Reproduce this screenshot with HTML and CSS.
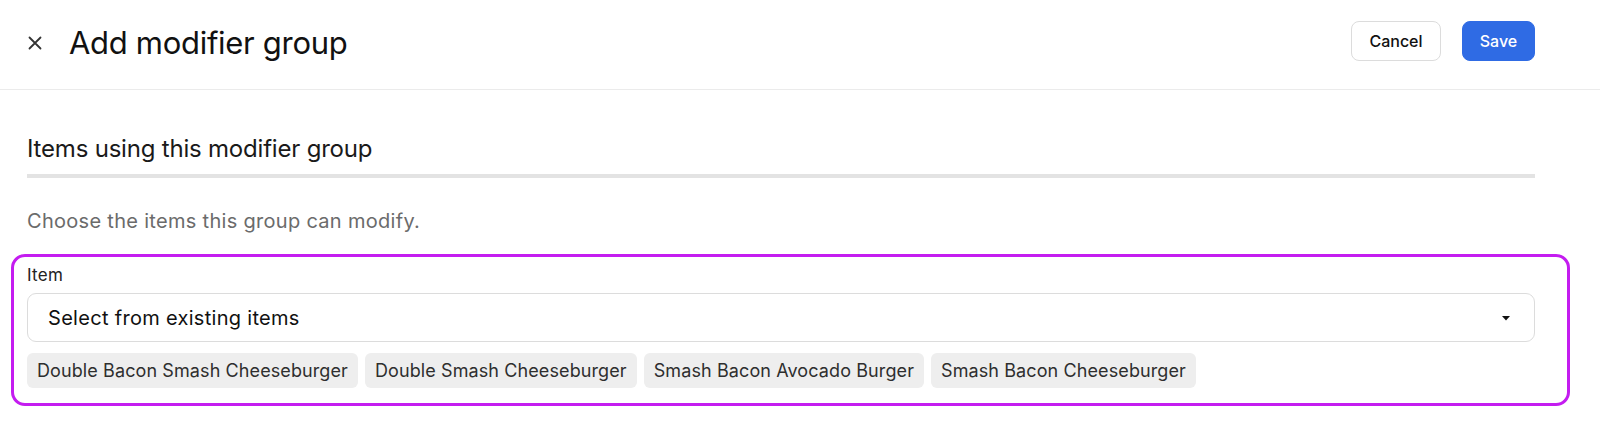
FILE: index.html
```html
<!DOCTYPE html>
<html lang="en">
<head>
  <meta charset="UTF-8" />
  <meta name="viewport" content="width=device-width, initial-scale=1.0"/>
  <title>Add modifier group</title>
  <link rel="stylesheet" href="styles.css">
</head>
<body>

  <header class="top-bar">
    <div class="title-wrap">
      <button class="close-btn" aria-label="Close">
        <svg width="14" height="14" viewBox="0 0 14 14"><path d="M1.5 1.5 L12.5 12.5 M12.5 1.5 L1.5 12.5" stroke="#333" stroke-width="1.8" stroke-linecap="round"/></svg>
      </button>
      <h1>Add modifier group</h1>
    </div>
    <div class="actions">
      <button class="btn cancel">Cancel</button>
      <button class="btn save">Save</button>
    </div>
  </header>

  <main class="content">
    <h2 class="section-title">Items using this modifier group</h2>
    <div class="section-rule"></div>
    <p class="hint">Choose the items this group can modify.</p>

    <div class="field highlight">
      <label class="field-label">Item</label>
      <div class="select">
        <span>Select from existing items</span>
        <svg class="caret" width="8" height="5" viewBox="0 0 8 5"><path d="M0 0 H8 L4 4.5 Z" fill="#111"/></svg>
      </div>
      <div class="chips">
        <span class="chip">Double Bacon Smash Cheeseburger</span>
        <span class="chip">Double Smash Cheeseburger</span>
        <span class="chip">Smash Bacon Avocado Burger</span>
        <span class="chip">Smash Bacon Cheeseburger</span>
      </div>
    </div>
  </main>

</body>
</html>
```

FILE: styles.css
```css
* { box-sizing: border-box; }

body {
  margin: 0;
  background: #ffffff;
  color: #111;
  font-family: 'Inter', 'Noto Sans', sans-serif;
}

.top-bar {
  height: 90px;
  display: flex;
  justify-content: space-between;
  align-items: center;
  padding: 0 65px 3px 27px;
  border-bottom: 1px solid #ebebeb;
}

.title-wrap {
  display: flex;
  align-items: center;
  gap: 26px;
}

.close-btn {
  background: none;
  border: none;
  padding: 0;
  width: 16px;
  height: 16px;
  display: flex;
  align-items: center;
  justify-content: center;
  cursor: pointer;
}

h1 {
  margin: 0;
  font-size: 31px;
  line-height: 40px;
  font-weight: 400;
  letter-spacing: -0.3px;
  color: #111;
}

.actions {
  display: flex;
  gap: 21px;
  margin-bottom: 4px;
}

.btn {
  height: 40px;
  padding: 0 15px;
  border-radius: 8px;
  font-family: inherit;
  font-size: 16px;
  font-weight: 500;
  cursor: pointer;
}

.cancel {
  background: #fff;
  border: 1px solid #dcdcdc;
  color: #111;
  width: 90px;
}

.save {
  background: #2f6be4;
  border: 1px solid #2f6be4;
  color: #fff;
  width: 73px;
}

.content {
  padding: 0 65px 0 27px;
}

.section-title {
  margin: 44px 0 0;
  font-size: 24px;
  line-height: 30px;
  font-weight: 400;
  letter-spacing: -0.2px;
  color: #1a1a1a;
}

.section-rule {
  height: 4px;
  background: #e3e3e3;
  margin-top: 10px;
}

.hint {
  margin: 30px 0 0;
  font-size: 20px;
  line-height: 26px;
  letter-spacing: 0.3px;
  color: #6b6b6b;
}

.field.highlight {
  margin: 20px -35px 0 -16px;
  padding: 7px 32px 15px 13px;
  border: 3px solid #c41cf0;
  border-radius: 14px;
}

.field-label {
  display: block;
  font-size: 17px;
  line-height: 22px;
  letter-spacing: 0.3px;
  color: #222;
}

.select {
  margin-top: 7px;
  height: 49px;
  border: 1px solid #dcdcdc;
  border-radius: 9px;
  display: flex;
  align-items: center;
  justify-content: space-between;
  padding: 0 24px 0 20px;
  font-size: 20px;
  letter-spacing: 0.3px;
  color: #111;
}

.caret {
  margin-top: 2px;
}

.chips {
  margin-top: 11px;
  display: flex;
  gap: 7px;
}

.chip {
  height: 35px;
  display: flex;
  align-items: center;
  padding: 0 10px;
  background: #eeeeee;
  border-radius: 6px;
  font-size: 18px;
  letter-spacing: 0.1px;
  color: #2e2e2e;
}
```
